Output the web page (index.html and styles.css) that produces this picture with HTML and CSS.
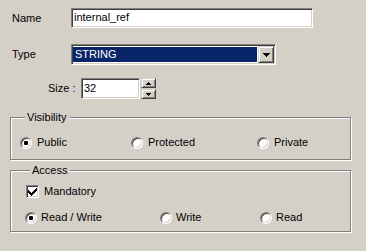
FILE: index.html
```html
<!DOCTYPE html>
<html>
<head>
<meta charset="utf-8">
<link rel="stylesheet" href="styles.css">
</head>
<body>
<div class="dialog">
  <div class="row row-name">
    <span class="lbl">Name</span>
    <div class="edit name-edit">internal_ref</div>
  </div>
  <div class="row row-type">
    <span class="lbl">Type</span>
    <div class="combo">
      <div class="combo-field"><span class="combo-sel">STRING</span></div>
      <div class="btn combo-btn">
        <svg width="7" height="4" viewBox="0 0 7 4"><path d="M0 0h7v1h-1v1h-1v1h-1v1h-1v-1h-1v-1h-1v-1h-1z" fill="#000"/></svg>
      </div>
    </div>
  </div>
  <div class="row row-size">
    <span class="lbl size-lbl">Size :</span>
    <div class="edit size-edit">32</div>
    <div class="spin">
      <div class="btn spin-btn">
        <svg width="5" height="3" viewBox="0 0 5 3"><path d="M2 0h1v1h1v1h1v1h-5v-1h1v-1h1z" fill="#000"/></svg>
      </div>
      <div class="btn spin-btn">
        <svg width="5" height="3" viewBox="0 0 5 3"><path d="M0 0h5v1h-1v1h-1v1h-1v-1h-1v-1h-1z" fill="#000"/></svg>
      </div>
    </div>
  </div>

  <fieldset class="group group-vis">
    <legend>Visibility</legend>
    <div class="opts vis-opts">
      <div class="opt"><span class="radio on"></span><span class="txt">Public</span></div>
      <div class="opt"><span class="radio"></span><span class="txt">Protected</span></div>
      <div class="opt"><span class="radio"></span><span class="txt">Private</span></div>
    </div>
  </fieldset>

  <fieldset class="group group-acc">
    <legend>Access</legend>
    <div class="opt check-row">
      <span class="check">
        <svg width="9" height="9" viewBox="0 0 9 9"><path d="M0 2h1v1h1v1h1v1h1v-1h1v-1h1v-1h1v-1h1v-1h1v3h-1v1h-1v1h-1v1h-1v1h-1v1h-1v-1h-1v-1h-1v-1h-1v-1h-1z" fill="#000" transform="translate(0,1)"/></svg>
      </span>
      <span class="txt">Mandatory</span>
    </div>
    <div class="opts acc-opts">
      <div class="opt"><span class="radio on"></span><span class="txt">Read / Write</span></div>
      <div class="opt"><span class="radio"></span><span class="txt">Write</span></div>
      <div class="opt"><span class="radio"></span><span class="txt">Read</span></div>
    </div>
  </fieldset>
</div>
</body>
</html>
```

FILE: styles.css
```css
html, body {
  margin: 0;
  padding: 0;
}
body {
  background: #d4d0c8;
  font-family: "Liberation Sans", Arial, sans-serif;
  font-size: 11px;
  color: #000;
  width: 366px;
  height: 251px;
  overflow: hidden;
}
.dialog {
  padding-top: 8px;
}
.row {
  display: flex;
  align-items: center;
}
.row-name {
  padding-left: 12px;
}
.lbl {
  width: 59px;
  line-height: 13px;
}
.edit {
  box-sizing: border-box;
  background: #fff;
  border: 1px solid;
  border-color: #808080 #fff #fff #808080;
  box-shadow: inset 1px 1px 0 #404040, inset -1px -1px 0 #d4d0c8;
  padding: 2px 2px 0 2px;
  line-height: 13px;
  white-space: nowrap;
}
.name-edit {
  width: 242px;
  height: 20px;
}
.row-type {
  margin-top: 16px;
  padding-left: 12px;
}
.combo {
  box-sizing: border-box;
  width: 205px;
  height: 21px;
  display: flex;
  background: #fff;
  border: 1px solid;
  border-color: #808080 #fff #fff #808080;
  box-shadow: inset 1px 1px 0 #404040, inset -1px -1px 0 #d4d0c8;
  padding: 1px;
}
.combo-field {
  flex: 1;
  display: flex;
  padding: 1px 1px 1px 0;
}
.combo-sel {
  flex: 1;
  background: #0a246a;
  color: #fff;
  line-height: 15px;
  padding-left: 2px;
}
.btn {
  box-sizing: border-box;
  background: #d4d0c8;
  border: 1px solid;
  border-color: #d4d0c8 #404040 #404040 #d4d0c8;
  box-shadow: inset 1px 1px 0 #fff, inset -1px -1px 0 #808080;
  display: flex;
  align-items: center;
  justify-content: center;
}
.btn svg {
  display: block;
}
.combo-btn {
  width: 16px;
  height: 17px;
}
.row-size {
  margin-top: 13px;
  padding-left: 48px;
}
.size-lbl {
  width: 33px;
}
.size-edit {
  width: 59px;
  height: 21px;
  padding-top: 3px;
}
.spin {
  display: flex;
  flex-direction: column;
  gap: 1px;
  margin-left: 1px;
}
.spin-btn {
  width: 15px;
  height: 10px;
}
.group {
  box-sizing: border-box;
  width: 341px;
  margin: 0 0 0 10px;
  padding: 0;
  border: 1px solid #808080;
  box-shadow: inset 1px 1px 0 #fff, 1px 1px 0 #fff;
}
.group legend {
  margin-left: 5px;
  padding: 0 3px 0 2px;
  line-height: 13px;
  background: #d4d0c8;
}
.group-vis {
  margin-top: 12px;
  padding: 13px 0 10px 9px;
}
.group-acc {
  margin-top: 4px;
  padding: 8px 0 7px 14px;
}
.opts {
  display: grid;
}
.vis-opts {
  grid-template-columns: 111px 126px 1fr;
}
.acc-opts {
  grid-template-columns: 135px 100px 1fr;
  margin-top: 14px;
}
.opt {
  display: flex;
  align-items: center;
  height: 12px;
}
.txt {
  line-height: 12px;
  margin-top: -2px;
  white-space: nowrap;
}
.radio {
  box-sizing: border-box;
  width: 12px;
  height: 12px;
  border-radius: 50%;
  background: #fff;
  border: 1px solid;
  border-color: #808080 #fff #fff #808080;
  box-shadow: inset 1px 1px 0 #404040, inset -1px -1px 0 #d4d0c8;
  margin-right: 5px;
  display: flex;
  align-items: center;
  justify-content: center;
  flex: none;
}
.radio.on::after {
  content: "";
  width: 4px;
  height: 4px;
  border-radius: 1px;
  background: #000;
}
.acc-opts .radio {
  margin-right: 4px;
}
.check-row {
  height: 13px;
  margin-left: 1px;
}
.check {
  box-sizing: border-box;
  width: 13px;
  height: 13px;
  background: #fff;
  border: 1px solid;
  border-color: #808080 #fff #fff #808080;
  box-shadow: inset 1px 1px 0 #404040, inset -1px -1px 0 #d4d0c8;
  display: flex;
  align-items: center;
  justify-content: center;
  margin-right: 5px;
  flex: none;
}
.check svg {
  display: block;
}
```
